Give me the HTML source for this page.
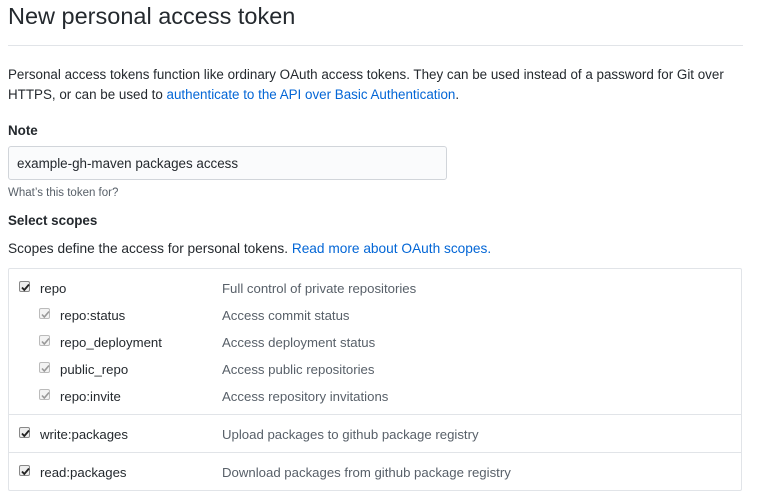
<!DOCTYPE html>
<html><head><style>
body{margin:0;background:#fff;font-family:"Liberation Sans",sans-serif;color:#24292e;width:757px;height:499px;overflow:hidden;position:relative}
.a{position:absolute;white-space:nowrap}
h1{position:absolute;left:8px;top:3px;margin:0;font-weight:400;font-size:23.5px;color:#24292e}
.hr{position:absolute;left:8px;top:45px;width:735px;height:1px;background:#e1e4e8}
.p{font-size:13.4px;line-height:20px}
a{color:#0366d6;text-decoration:none}
.inp{position:absolute;left:8px;top:146px;width:439px;height:34px;border:1px solid #d1d5da;border-radius:3px;background:#fafbfc;box-sizing:border-box;font-size:13.4px;padding:9px 8px;line-height:16px}
.box{position:absolute;left:8px;top:268px;width:734px;height:223px;border:1px solid #e1e4e8;border-radius:2px;box-sizing:border-box}
.cb{position:absolute;width:11px;height:11px;border:1px solid #888;border-radius:2px;background:#eee;box-sizing:border-box}
.cb svg{position:absolute;left:0;top:0}
.cb.d{border-color:#bbb;background:#f3f3f3}
.t{font-size:13.2px}
.d2{color:#586069;font-size:13.2px}
.sep{position:absolute;left:9px;width:732px;height:1px;background:#e1e4e8}
</style></head><body>
<h1>New personal access token</h1>
<div class="hr"></div>
<div class="a p" style="left:8px;top:65px">Personal access tokens function like ordinary OAuth access tokens. They can be used instead of a password for Git over<br>HTTPS, or can be used to <a>authenticate to the API over Basic Authentication</a>.</div>
<div class="a" style="left:8px;top:123px;font-weight:bold;font-size:13.4px">Note</div>
<div class="inp">example-gh-maven packages access</div>
<div class="a" style="left:8px;top:187px;font-size:11.5px;color:#586069">What’s this token for?</div>
<div class="a" style="left:8px;top:213px;font-weight:bold;font-size:13.4px">Select scopes</div>
<div class="a p" style="left:8px;top:239px;font-size:13.7px">Scopes define the access for personal tokens. <a>Read more about OAuth scopes.</a></div>
<div class="box"></div>

<div class="cb" style="left:19px;top:281px"><svg width="11" height="11"><path d="M2 5.5L4.3 8L9 2.5" stroke="#222" stroke-width="1.8" fill="none"/></svg></div>
<div class="a t" style="left:40px;top:281px">repo</div>
<div class="a d2" style="left:222px;top:281px">Full control of private repositories</div>

<div class="cb d" style="left:39px;top:308px"><svg width="11" height="11"><path d="M2 5.5L4.3 8L9 2.5" stroke="#999" stroke-width="1.6" fill="none"/></svg></div>
<div class="a t" style="left:60px;top:308px">repo:status</div>
<div class="a d2" style="left:222px;top:308px">Access commit status</div>

<div class="cb d" style="left:39px;top:335px"><svg width="11" height="11"><path d="M2 5.5L4.3 8L9 2.5" stroke="#999" stroke-width="1.6" fill="none"/></svg></div>
<div class="a t" style="left:60px;top:335px">repo_deployment</div>
<div class="a d2" style="left:222px;top:335px">Access deployment status</div>

<div class="cb d" style="left:39px;top:362px"><svg width="11" height="11"><path d="M2 5.5L4.3 8L9 2.5" stroke="#999" stroke-width="1.6" fill="none"/></svg></div>
<div class="a t" style="left:60px;top:362px">public_repo</div>
<div class="a d2" style="left:222px;top:362px">Access public repositories</div>

<div class="cb d" style="left:39px;top:389px"><svg width="11" height="11"><path d="M2 5.5L4.3 8L9 2.5" stroke="#999" stroke-width="1.6" fill="none"/></svg></div>
<div class="a t" style="left:60px;top:389px">repo:invite</div>
<div class="a d2" style="left:222px;top:389px">Access repository invitations</div>

<div class="sep" style="top:414px"></div>
<div class="cb" style="left:19px;top:427px"><svg width="11" height="11"><path d="M2 5.5L4.3 8L9 2.5" stroke="#222" stroke-width="1.8" fill="none"/></svg></div>
<div class="a t" style="left:40px;top:427px">write:packages</div>
<div class="a d2" style="left:222px;top:427px">Upload packages to github package registry</div>

<div class="sep" style="top:452px"></div>
<div class="cb" style="left:19px;top:465px"><svg width="11" height="11"><path d="M2 5.5L4.3 8L9 2.5" stroke="#222" stroke-width="1.8" fill="none"/></svg></div>
<div class="a t" style="left:40px;top:465px">read:packages</div>
<div class="a d2" style="left:222px;top:465px">Download packages from github package registry</div>
</body></html>
